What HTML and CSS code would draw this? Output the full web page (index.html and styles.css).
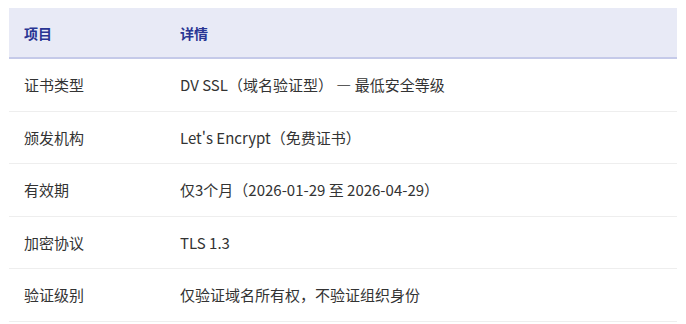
FILE: index.html
```html
<!DOCTYPE html>
<html lang="zh-CN">
<head>
<meta charset="utf-8">
<title>证书信息</title>
<link rel="stylesheet" href="styles.css">
</head>
<body>
<table class="info-table">
  <thead>
    <tr><th class="col-key">项目</th><th>详情</th></tr>
  </thead>
  <tbody>
    <tr><td>证书类型</td><td>DV SSL（域名验证型） — 最低安全等级</td></tr>
    <tr><td>颁发机构</td><td>Let's Encrypt（免费证书）</td></tr>
    <tr><td>有效期</td><td>仅3个月（2026-01-29 至 2026-04-29）</td></tr>
    <tr><td>加密协议</td><td>TLS 1.3</td></tr>
    <tr><td>验证级别</td><td>仅验证域名所有权，不验证组织身份</td></tr>
  </tbody>
</table>
</body>
</html>
```
FILE: styles.css
```css
html, body {
  margin: 0;
  background: #ffffff;
}
body {
  padding: 8px 9px;
  font-family: "Noto Sans CJK SC", "Noto Sans", sans-serif;
  color: #333333;
}
.info-table {
  width: 100%;
  border-collapse: collapse;
}
.info-table th {
  background: #e8eaf6;
  color: #283593;
  font-size: 14px;
  font-weight: 700;
  text-align: left;
  line-height: 22px;
  padding: 13.5px 15px;
  border-bottom: 2px solid #c5cae9;
}
.info-table .col-key {
  width: 126px;
}
.info-table td {
  font-size: 15px;
  line-height: 21.5px;
  padding: 15px 15px;
  border-bottom: 1px solid #eeeeee;
}
```
